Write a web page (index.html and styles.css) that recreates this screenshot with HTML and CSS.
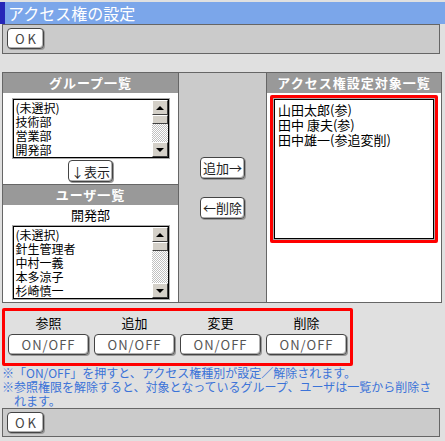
FILE: index.html
```
<!DOCTYPE html>
<html lang="ja">
<head>
    <title>アクセス権の設定</title>
    <meta charset="UTF-8">
    <link rel="stylesheet" href="styles.css">
</head>
<body>
    <div class="title">アクセス権の設定</div>

    <div class="toolbar">
        <button class="btn btn-ok">OK</button>
    </div>

    <div class="main">
        <div class="col-left">
            <div class="col-head">グループ一覧</div>
            <div class="listbox group-list">
                <div class="items">
                    <div>(未選択)</div>
                    <div>技術部</div>
                    <div>営業部</div>
                    <div>開発部</div>
                </div>
                <div class="scroll">
                    <span class="arrow up"></span>
                    <span class="thumb"></span>
                    <span class="track"></span>
                    <span class="arrow down"></span>
                </div>
            </div>
            <button class="btn btn-small show-btn">↓表示</button>
            <div class="col-head head-border">ユーザ一覧</div>
            <div class="group-name">開発部</div>
            <div class="listbox user-list">
                <div class="items">
                    <div>(未選択)</div>
                    <div>針生管理者</div>
                    <div>中村一義</div>
                    <div>本多涼子</div>
                    <div>杉崎慎一</div>
                </div>
                <div class="scroll">
                    <span class="arrow up"></span>
                    <span class="thumb"></span>
                    <span class="track"></span>
                    <span class="arrow down"></span>
                </div>
            </div>
        </div>

        <div class="col-mid">
            <button class="btn btn-small">追加→</button>
            <button class="btn btn-small">←削除</button>
        </div>

        <div class="col-right">
            <div class="col-head">アクセス権設定対象一覧</div>
            <div class="target-box">
                <div class="target-list">
                    <div>山田太郎(参)</div>
                    <div>田中 康夫(参)</div>
                    <div>田中雄一(参追変削)</div>
                </div>
            </div>
        </div>
    </div>

    <div class="perms">
        <div class="perm">
            <span>参照</span>
            <button class="btn btn-onoff">ON/OFF</button>
        </div>
        <div class="perm">
            <span>追加</span>
            <button class="btn btn-onoff">ON/OFF</button>
        </div>
        <div class="perm">
            <span>変更</span>
            <button class="btn btn-onoff">ON/OFF</button>
        </div>
        <div class="perm">
            <span>削除</span>
            <button class="btn btn-onoff">ON/OFF</button>
        </div>
    </div>

    <div class="notes">
        <p>※「ON/OFF」を押すと、アクセス権種別が設定／解除されます。</p>
        <p>※参照権限を解除すると、対象となっているグループ、ユーザは一覧から削除されます。</p>
    </div>

    <div class="toolbar bottom">
        <button class="btn btn-ok">OK</button>
    </div>
</body>
</html>
```

FILE: styles.css
```
body {
    margin: 0;
    width: 445px;
    background: #e0e0e0;
    font-family: "Noto Sans CJK JP", "DejaVu Sans", sans-serif;
    font-size: 13px;
    color: #000;
}

.title {
    margin-top: 2px;
    height: 22px;
    line-height: 22px;
    background: #7ba6ea;
    border-left: 5px solid #2626b8;
    padding-left: 3px;
    color: #fff;
    font-size: 16px;
}

.toolbar {
    margin-left: 2px;
    width: 438px;
    height: 30px;
    border: 1px solid #666;
    background: #cbcbcb;
    padding: 3px 0 0 4px;
    box-sizing: border-box;
}

.toolbar.bottom {
    height: 29px;
}

/* buttons */
.btn {
    background: #fff;
    border: 1px solid #444;
    border-radius: 4px;
    box-shadow: inset -1px -1px 0 #b0b0b0, inset 1px 1px 0 #fff, 1px 1px 0 #999;
    font-family: "Noto Sans CJK JP", "DejaVu Sans", sans-serif;
    color: #444;
    padding: 0;
    cursor: pointer;
}

.btn-ok {
    width: 37px;
    height: 21px;
    font-size: 13px;
    letter-spacing: 3px;
    padding-left: 3px;
}

.btn-small {
    height: 22px;
    padding: 0 2px;
    font-size: 13px;
    color: #222;
}

.btn-onoff {
    width: 81px;
    height: 21px;
    font-size: 13px;
    color: #555;
    letter-spacing: 1px;
}

/* main table */
.main {
    margin: 18px 0 0 2px;
    width: 440px;
    height: 231px;
    display: grid;
    grid-template-columns: 175px 87px 174px;
    gap: 1px;
    padding: 1px;
    box-sizing: border-box;
    background: #666;
}

.col-left,
.col-right {
    background: #fff;
    display: flex;
    flex-direction: column;
}

.col-left {
    align-items: center;
}

.col-head {
    align-self: stretch;
    height: 20px;
    line-height: 20px;
    background: #999;
    color: #fff;
    font-weight: bold;
    text-align: center;
    font-size: 13px;
    letter-spacing: 1px;
}

.head-border {
    border-top: 1px solid #666;
    margin-top: 2px;
}

.col-mid {
    background: #cbcbcb;
    display: flex;
    flex-direction: column;
    align-items: center;
    justify-content: center;
    gap: 18px;
}

/* list boxes */
.listbox {
    width: 158px;
    border: 1px solid #aaa;
    box-sizing: border-box;
    display: flex;
    background: #fff;
}

.listbox .items {
    flex: 1;
    border: 1px solid #000;
    border-right: none;
    padding: 1px 0 0 2px;
    font-size: 12px;
    line-height: 14px;
    overflow: hidden;
}

.group-list {
    margin-top: 5px;
    height: 61px;
}

.user-list {
    margin-top: 1px;
    height: 75px;
}

.show-btn {
    margin-top: 1px;
}

.group-name {
    height: 18px;
    line-height: 18px;
    margin-top: 1px;
}

.scroll {
    width: 16px;
    display: flex;
    flex-direction: column;
    border: 1px solid #000;
    border-left: none;
}

.scroll .arrow,
.scroll .thumb {
    height: 15px;
    box-sizing: border-box;
    background: #d4d0c8;
    border: 1px solid;
    border-color: #fff #404040 #404040 #fff;
    position: relative;
}

.scroll .thumb {
    height: 9px;
}

.scroll .track {
    flex: 1;
    background-color: #e8e8e8;
    background-image: repeating-conic-gradient(#c0c0c0 0 25%, #fff 0 50%);
    background-size: 2px 2px;
}

.scroll .arrow::after {
    content: "";
    position: absolute;
    left: 3px;
    top: 5px;
    border-left: 4px solid transparent;
    border-right: 4px solid transparent;
}

.scroll .up::after {
    border-bottom: 4px solid #000;
}

.scroll .down::after {
    border-top: 4px solid #000;
}

/* right column */
.target-box {
    margin: 2px 3px 0 3px;
    height: 148px;
    border: 3px solid #f00;
    border-radius: 2px;
    box-sizing: border-box;
    background: #fff;
    padding: 1px;
}

.target-list {
    height: 100%;
    box-sizing: border-box;
    border: 1px solid #000;
    outline: 1px solid #aaa;
    padding: 2px 0 0 3px;
    line-height: 15px;
}

/* permissions */
.perms {
    margin: 5px 0 0 2px;
    width: 351px;
    height: 58px;
    border: 3px solid #f00;
    border-radius: 2px;
    box-sizing: border-box;
    display: flex;
    gap: 5px;
    padding: 0 0 0 3px;
}

.perm {
    width: 81px;
    display: flex;
    flex-direction: column;
    align-items: center;
}

.perm span {
    height: 21px;
    line-height: 20px;
    margin-top: 2px;
}

/* notes */
.notes {
    color: #3b73d8;
    font-size: 12px;
    line-height: 14px;
    padding-left: 2px;
    width: 430px;
}

.notes p {
    margin: 0;
    padding-left: 12px;
    text-indent: -12px;
}
```
